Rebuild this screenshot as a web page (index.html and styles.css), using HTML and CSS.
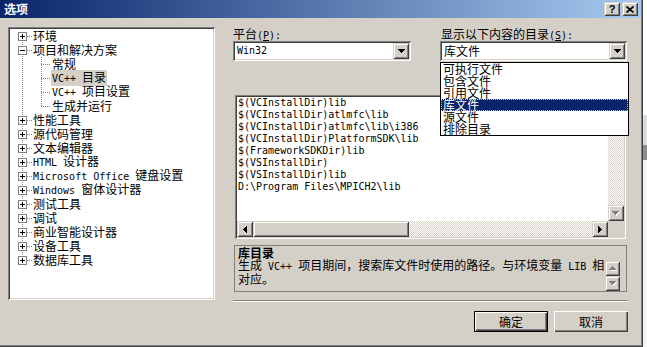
FILE: index.html
```html
<!DOCTYPE html>
<html lang="zh-CN">
<head>
  <meta charset="UTF-8">
  <title>选项</title>
  <link rel="stylesheet" href="styles.css">
</head>
<body>
  <div id="dialog">
    <div class="titlebar">
      <span class="title">选项</span>
      <span class="capbtns">
        <span class="capbtn raised">?</span>
        <span class="capbtn raised">
          <svg width="8" height="7" viewBox="0 0 8 7"><path d="M0.5 0.5l7 6M7.5 0.5l-7 6" stroke="#000" stroke-width="1.7"/></svg>
        </span>
      </span>
    </div>

    <div class="content">
      <div class="tree sunken">
        <ul class="nodes">
          <li><div class="row"><svg class="exp" width="9" height="9"><rect x="0.5" y="0.5" width="8" height="8" fill="#fff" stroke="#808080"/><path d="M2 4.5h5M4.5 2v5" stroke="#000"/></svg><i class="hline"></i><span class="label">环境</span></div></li>
          <li>
            <div class="row"><svg class="exp" width="9" height="9"><rect x="0.5" y="0.5" width="8" height="8" fill="#fff" stroke="#808080"/><path d="M2 4.5h5" stroke="#000"/></svg><i class="hline"></i><span class="label">项目和解决方案</span></div>
            <ul class="children">
              <li><div class="row child"><i class="hline"></i><span class="label">常规</span></div></li>
              <li><div class="row child"><i class="hline"></i><span class="label sel"><span class="en">VC++ </span>目录</span></div></li>
              <li><div class="row child"><i class="hline"></i><span class="label"><span class="en">VC++ </span>项目设置</span></div></li>
              <li><div class="row child"><i class="hline"></i><span class="label">生成并运行</span></div></li>
            </ul>
          </li>
          <li><div class="row"><svg class="exp" width="9" height="9"><rect x="0.5" y="0.5" width="8" height="8" fill="#fff" stroke="#808080"/><path d="M2 4.5h5M4.5 2v5" stroke="#000"/></svg><i class="hline"></i><span class="label">性能工具</span></div></li>
          <li><div class="row"><svg class="exp" width="9" height="9"><rect x="0.5" y="0.5" width="8" height="8" fill="#fff" stroke="#808080"/><path d="M2 4.5h5M4.5 2v5" stroke="#000"/></svg><i class="hline"></i><span class="label">源代码管理</span></div></li>
          <li><div class="row"><svg class="exp" width="9" height="9"><rect x="0.5" y="0.5" width="8" height="8" fill="#fff" stroke="#808080"/><path d="M2 4.5h5M4.5 2v5" stroke="#000"/></svg><i class="hline"></i><span class="label">文本编辑器</span></div></li>
          <li><div class="row"><svg class="exp" width="9" height="9"><rect x="0.5" y="0.5" width="8" height="8" fill="#fff" stroke="#808080"/><path d="M2 4.5h5M4.5 2v5" stroke="#000"/></svg><i class="hline"></i><span class="label"><span class="en">HTML </span>设计器</span></div></li>
          <li><div class="row"><svg class="exp" width="9" height="9"><rect x="0.5" y="0.5" width="8" height="8" fill="#fff" stroke="#808080"/><path d="M2 4.5h5M4.5 2v5" stroke="#000"/></svg><i class="hline"></i><span class="label"><span class="en">Microsoft Office </span>键盘设置</span></div></li>
          <li><div class="row"><svg class="exp" width="9" height="9"><rect x="0.5" y="0.5" width="8" height="8" fill="#fff" stroke="#808080"/><path d="M2 4.5h5M4.5 2v5" stroke="#000"/></svg><i class="hline"></i><span class="label"><span class="en">Windows </span>窗体设计器</span></div></li>
          <li><div class="row"><svg class="exp" width="9" height="9"><rect x="0.5" y="0.5" width="8" height="8" fill="#fff" stroke="#808080"/><path d="M2 4.5h5M4.5 2v5" stroke="#000"/></svg><i class="hline"></i><span class="label">测试工具</span></div></li>
          <li><div class="row"><svg class="exp" width="9" height="9"><rect x="0.5" y="0.5" width="8" height="8" fill="#fff" stroke="#808080"/><path d="M2 4.5h5M4.5 2v5" stroke="#000"/></svg><i class="hline"></i><span class="label">调试</span></div></li>
          <li><div class="row"><svg class="exp" width="9" height="9"><rect x="0.5" y="0.5" width="8" height="8" fill="#fff" stroke="#808080"/><path d="M2 4.5h5M4.5 2v5" stroke="#000"/></svg><i class="hline"></i><span class="label">商业智能设计器</span></div></li>
          <li><div class="row"><svg class="exp" width="9" height="9"><rect x="0.5" y="0.5" width="8" height="8" fill="#fff" stroke="#808080"/><path d="M2 4.5h5M4.5 2v5" stroke="#000"/></svg><i class="hline"></i><span class="label">设备工具</span></div></li>
          <li><div class="row"><svg class="exp" width="9" height="9"><rect x="0.5" y="0.5" width="8" height="8" fill="#fff" stroke="#808080"/><path d="M2 4.5h5M4.5 2v5" stroke="#000"/></svg><i class="hline"></i><span class="label">数据库工具</span></div></li>
        </ul>
      </div>

      <div class="side">
        <div class="fields">
          <div class="field f-platform">
            <label>平台<span class="en">(<u>P</u>):</span></label>
            <div class="combo">
              <span class="val en">Win32</span>
              <span class="dropbtn raised"><svg width="7" height="4"><path d="M0 0h7v1h-1v1h-1v1h-1v1h-1v-1h-1v-1h-1v-1h-1z"/></svg></span>
            </div>
          </div>
          <div class="field f-dirs">
            <label>显示以下内容的目录<span class="en">(<u>S</u>):</span></label>
            <div class="combo">
              <span class="val">库文件</span>
              <span class="dropbtn raised"><svg width="7" height="4"><path d="M0 0h7v1h-1v1h-1v1h-1v1h-1v-1h-1v-1h-1v-1h-1z"/></svg></span>
            </div>
            <ul class="droplist">
              <li>可执行文件</li>
              <li>包含文件</li>
              <li>引用文件</li>
              <li class="sel">库文件</li>
              <li>源文件</li>
              <li>排除目录</li>
            </ul>
          </div>
        </div>

        <div class="listbox sunken">
          <div class="lines">$(VCInstallDir)lib
$(VCInstallDir)atlmfc\lib
$(VCInstallDir)atlmfc\lib\i386
$(VCInstallDir)PlatformSDK\lib
$(FrameworkSDKDir)lib
$(VSInstallDir)
$(VSInstallDir)lib
D:\Program Files\MPICH2\lib</div>
          <div class="vscroll checker">
            <span class="arrow raised"><svg width="7" height="4"><path d="M3 0h1v1h1v1h1v1h1v1h-7v-1h1v-1h1v-1h1z"/></svg></span>
            <span class="vthumb raised"></span>
            <span class="arrow raised bottom"><svg width="8" height="5"><path transform="translate(1 1)" fill="#fff" d="M0 0h7v1h-1v1h-1v1h-1v1h-1v-1h-1v-1h-1v-1h-1z"/><path fill="#808080" d="M0 0h7v1h-1v1h-1v1h-1v1h-1v-1h-1v-1h-1v-1h-1z"/></svg></span>
          </div>
          <div class="hscroll checker">
            <span class="arrow raised"><svg width="4" height="7"><path d="M3 0h1v7h-1v-1h-1v-1h-1v-1h-1v-1h1v-1h1v-1h1z"/></svg></span>
            <span class="hthumb raised"></span>
            <span class="arrow raised end"><svg width="4" height="7"><path d="M0 0v7h1v-1h1v-1h1v-1h1v-1h-1v-1h-1v-1h-1v-1z"/></svg></span>
          </div>
          <div class="corner"></div>
        </div>

        <div class="desc">
          <div class="text">
            <b>库目录</b>
            生成<span class="en"> VC++ </span>项目期间，搜索库文件时使用的路径。与环境变量<span class="en"> LIB </span>相<br>对应。
          </div>
          <div class="spin">
            <span class="raised"><svg width="8" height="5"><path transform="translate(1 1)" fill="#fff" d="M3 0h1v1h1v1h1v1h1v1h-7v-1h1v-1h1v-1h1z"/><path fill="#808080" d="M3 0h1v1h1v1h1v1h1v1h-7v-1h1v-1h1v-1h1z"/></svg></span>
            <span class="raised"><svg width="8" height="5"><path transform="translate(1 1)" fill="#fff" d="M0 0h7v1h-1v1h-1v1h-1v1h-1v-1h-1v-1h-1v-1h-1z"/><path fill="#808080" d="M0 0h7v1h-1v1h-1v1h-1v1h-1v-1h-1v-1h-1v-1h-1z"/></svg></span>
          </div>
        </div>

        <div class="sep"></div>

        <div class="buttons">
          <span class="push default">确定</span>
          <span class="push">取消</span>
        </div>
      </div>
    </div>
  </div>
</body>
</html>
```

FILE: styles.css
```css
*{
  margin: 0;
  padding: 0;
  box-sizing: border-box;
}
body{
  width: 647px;
  height: 347px;
  overflow: hidden;
  font-family: "Noto Sans CJK SC", sans-serif;
  font-size: 12px;
  line-height: 14px;
  color: #000;
  background: linear-gradient(#fff 0 115px, #dcdcdc 115px 145px, #8c8c8c 145px 160px, #f4f4f4 160px);
}
ul{
  list-style: none;
}
.en{
  font-family: "DejaVu Sans Mono", monospace;
  font-size: 10px;
}

/* classic 3d edges */
.raised{
  background: #d4d0c8;
  box-shadow: inset 1px 1px #d4d0c8, inset -1px -1px #404040, inset 2px 2px #fff, inset -2px -2px #808080;
}
.sunken{
  padding: 2px;
  background: #fff;
  box-shadow: inset 1px 1px #808080, inset -1px -1px #fff, inset 2px 2px #404040, inset -2px -2px #d4d0c8;
}
.checker{
  background: repeating-conic-gradient(#d4d0c8 0 25%, #fff 0 50%) 0 0 / 2px 2px;
}

#dialog{
  width: 643px;
  height: 347px;
  padding: 0 2px 2px 0;
  background: #d4d0c8;
  box-shadow: inset -1px -1px #404040, inset -2px -2px #808080;
}

.titlebar{
  display: flex;
  align-items: center;
  justify-content: space-between;
  height: 18px;
  padding: 0 3px 0 4px;
  color: #fff;
  background: linear-gradient(to right, #0a246a, #a6caf0);
}
.title{
  font-weight: bold;
}
.capbtns{
  display: flex;
  gap: 2px;
}
.capbtn{
  display: flex;
  align-items: center;
  justify-content: center;
  width: 16px;
  height: 14px;
  color: #000;
  font: bold 11px/14px "Liberation Sans", sans-serif;
}

.content{
  display: grid;
  grid-template-columns: 207px 395px;
  column-gap: 18px;
  padding: 9px 0 0 8px;
}

/* tree */
.tree{
  height: 273px;
  overflow: hidden;
}
.nodes{
  background: repeating-linear-gradient(#808080 0 1px, transparent 1px 2px) 12px 7px / 1px calc(100% - 14px) no-repeat;
}
.children{
  background: repeating-linear-gradient(#808080 0 1px, transparent 1px 2px) 31px 0 / 1px calc(100% - 7px) no-repeat;
}
.row{
  display: flex;
  align-items: center;
  height: 14px;
  white-space: nowrap;
}
.exp{
  flex: none;
  margin-left: 8px;
}
.hline{
  flex: none;
  width: 5px;
  height: 1px;
  background: repeating-linear-gradient(to right, #808080 0 1px, transparent 1px 2px);
}
.row.child{
  padding-left: 31px;
}
.row.child .hline{
  width: 10px;
}
.label{
  padding: 0 1px;
  line-height: 14px;
}
.label.sel{
  background: #d4d0c8;
}

/* right side */
.side{
  display: flex;
  flex-direction: column;
}
.fields{
  display: flex;
  height: 34px;
}
.field{
  position: relative;
}
.f-platform{
  width: 178px;
}
.f-dirs{
  width: 187px;
  margin-left: 29px;
}
.field label{
  display: block;
  height: 14px;
}
.f-dirs label{
  padding-left: 1px;
}
.combo{
  display: flex;
  align-items: center;
  height: 20px;
  padding: 2px;
  background: #fff;
  box-shadow: inset 1px 1px #808080, inset -1px -1px #fff, inset 2px 2px #404040, inset -2px -2px #d4d0c8;
}
.combo .val{
  flex: 1;
  padding-left: 2px;
  line-height: 16px;
}
.dropbtn{
  display: flex;
  align-items: center;
  justify-content: center;
  width: 16px;
  height: 16px;
}

.droplist{
  position: absolute;
  left: 0;
  top: 35px;
  z-index: 2;
  width: 189px;
  border: 1px solid #000;
  background: #fff;
}
.droplist li{
  height: 12px;
  padding-left: 2px;
  line-height: 12px;
}
.droplist li.sel{
  color: #fff;
  background: #0a246a;
  outline: 1px dotted #e8c878;
  outline-offset: -1px;
}

/* directory list */
.listbox{
  display: grid;
  grid-template-columns: 1fr 16px;
  grid-template-rows: 1fr 16px;
  width: 391px;
  height: 144px;
  margin: 34px 0 0 2px;
}
.lines{
  padding-left: 1px;
  font-family: "DejaVu Sans Mono", monospace;
  font-size: 10px;
  line-height: 12px;
  white-space: pre;
  overflow: hidden;
}
.vscroll{
  display: flex;
  flex-direction: column;
}
.hscroll{
  display: flex;
}
.arrow{
  display: flex;
  align-items: center;
  justify-content: center;
  flex: none;
  width: 16px;
  height: 16px;
}
.arrow.bottom{
  margin-top: auto;
}
.arrow.end{
  margin-left: auto;
}
.vthumb{
  height: 20px;
}
.hthumb{
  width: 156px;
}
.corner{
  background: #d4d0c8;
}

/* description */
.desc{
  display: flex;
  width: 393px;
  height: 47px;
  margin: 6px 0 0 1px;
  padding: 1px 6px 0 3px;
  border: 1px solid #808080;
}
.desc .text{
  flex: 1;
  line-height: 12px;
}
.desc .text b{
  display: block;
}
.spin{
  display: flex;
  flex-direction: column;
  align-self: flex-end;
  width: 15px;
}
.spin span{
  display: flex;
  align-items: center;
  justify-content: center;
  height: 15px;
}

.sep{
  height: 2px;
  margin-top: 8px;
  border-top: 1px solid #808080;
  border-bottom: 1px solid #fff;
}

.buttons{
  display: flex;
  justify-content: flex-end;
  gap: 6px;
  margin-top: 9px;
}
.push{
  display: flex;
  align-items: center;
  justify-content: center;
  width: 74px;
  height: 21px;
  background: #d4d0c8;
  box-shadow: inset 1px 1px #fff, inset -1px -1px #404040, inset -2px -2px #808080;
}
.push.default{
  box-shadow: inset 0 0 0 1px #000, inset 2px 2px #fff, inset -2px -2px #404040, inset -3px -3px #808080;
}
```
